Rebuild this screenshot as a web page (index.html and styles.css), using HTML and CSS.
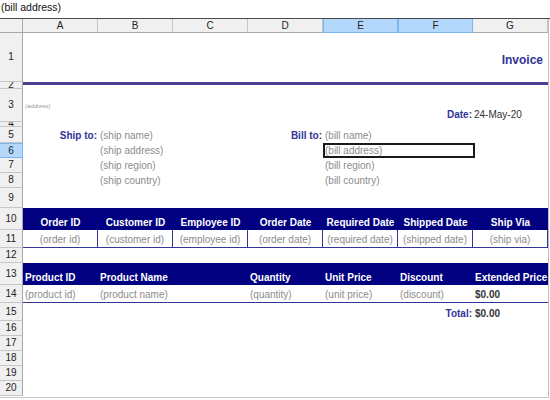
FILE: index.html
```html
<!DOCTYPE html>
<html>
<head>
<meta charset="utf-8">
<link rel="stylesheet" href="styles.css">
</head>
<body>
<div class="formula">(bill address)</div>
<div class="sheet">
  <div class="row colhdr">
    <div class="ch corner"></div>
    <div class="ch">A</div><div class="ch">B</div><div class="ch">C</div><div class="ch">D</div>
    <div class="ch sel">E</div><div class="ch sel">F</div><div class="ch">G</div>
  </div>

  <div class="row h49">
    <div class="rh">1</div>
    <div class="c span6"></div>
    <div class="c rt title">Invoice</div>
  </div>

  <div class="row h7">
    <div class="rh">2</div>
    <div class="c span7 rule"></div>
  </div>

  <div class="row h33">
    <div class="rh">3</div>
    <div class="c mid addr">(address)</div>
    <div class="c span4"></div>
    <div class="c rt lbl">Date:</div>
    <div class="c val">24-May-20</div>
  </div>

  <div class="row h5">
    <div class="rh">4</div>
  </div>

  <div class="row h16">
    <div class="rh">5</div>
    <div class="c rt lbl">Ship to:</div>
    <div class="c gray">(ship name)</div>
    <div class="c"></div>
    <div class="c rt lbl">Bill to:</div>
    <div class="c gray">(bill name)</div>
  </div>

  <div class="row h15">
    <div class="rh rsel">6</div>
    <div class="c"></div>
    <div class="c gray">(ship address)</div>
    <div class="c"></div>
    <div class="c"></div>
    <div class="c span2 gray active">(bill address)</div>
  </div>

  <div class="row h15">
    <div class="rh">7</div>
    <div class="c"></div>
    <div class="c gray">(ship region)</div>
    <div class="c"></div>
    <div class="c"></div>
    <div class="c gray">(bill region)</div>
  </div>

  <div class="row h15">
    <div class="rh">8</div>
    <div class="c"></div>
    <div class="c gray">(ship country)</div>
    <div class="c"></div>
    <div class="c"></div>
    <div class="c gray">(bill country)</div>
  </div>

  <div class="row h20">
    <div class="rh">9</div>
  </div>

  <div class="row h22">
    <div class="rh">10</div>
    <div class="c band ctr">Order ID</div>
    <div class="c band ctr">Customer ID</div>
    <div class="c band ctr">Employee ID</div>
    <div class="c band ctr">Order Date</div>
    <div class="c band ctr">Required Date</div>
    <div class="c band ctr">Shipped Date</div>
    <div class="c band ctr">Ship Via</div>
  </div>

  <div class="row h18">
    <div class="rh">11</div>
    <div class="c data ctr gray">(order id)</div>
    <div class="c data ctr gray">(customer id)</div>
    <div class="c data ctr gray">(employee id)</div>
    <div class="c data ctr gray">(order date)</div>
    <div class="c data ctr gray">(required date)</div>
    <div class="c data ctr gray">(shipped date)</div>
    <div class="c data ctr gray">(ship via)</div>
  </div>

  <div class="row h15">
    <div class="rh">12</div>
  </div>

  <div class="row h22">
    <div class="rh">13</div>
    <div class="c band">Product ID</div>
    <div class="c band span2">Product Name</div>
    <div class="c band">Quantity</div>
    <div class="c band">Unit Price</div>
    <div class="c band">Discount</div>
    <div class="c band">Extended Price</div>
  </div>

  <div class="row h18">
    <div class="rh">14</div>
    <div class="c line gray">(product id)</div>
    <div class="c line span2 gray">(product name)</div>
    <div class="c line gray">(quantity)</div>
    <div class="c line gray">(unit price)</div>
    <div class="c line gray">(discount)</div>
    <div class="c line money">$0.00</div>
  </div>

  <div class="row h18">
    <div class="rh">15</div>
    <div class="c span5"></div>
    <div class="c rt lbl">Total:</div>
    <div class="c money">$0.00</div>
  </div>

  <div class="row h15"><div class="rh">16</div></div>
  <div class="row h15"><div class="rh">17</div></div>
  <div class="row h15"><div class="rh">18</div></div>
  <div class="row h15"><div class="rh">19</div></div>
  <div class="row h15"><div class="rh">20</div></div>
</div>
</body>
</html>
```

FILE: styles.css
```css
html, body {
  margin: 0;
  padding: 0;
  background: #ffffff;
}

body {
  font-family: "Liberation Sans", Arial, sans-serif;
  font-size: 10px;
  color: #222222;
  width: 550px;
  height: 400px;
  overflow: hidden;
}

.formula {
  height: 18px;
  line-height: 14px;
  padding-left: 1px;
  font-size: 10.5px;
  color: #111111;
  border-bottom: 1px solid #4a4a4a;
  box-sizing: content-box;
}

.sheet {
  width: 548px;
  height: 378px;
  border-right: 1px solid #bdbdbd;
  border-bottom: 1px solid #c8c8c8;
  overflow: hidden;
}

.row {
  display: grid;
  grid-template-columns: 23px repeat(6, 75px) 75px;
  overflow: hidden;
}

.colhdr { height: 14px; }
.h5 { height: 5px; }
.h7 { height: 7px; }
.h15 { height: 15px; }
.h16 { height: 16px; }
.h18 { height: 18px; }
.h20 { height: 20px; }
.h22 { height: 22px; }
.h33 { height: 33px; }
.h49 { height: 49px; }

.ch {
  background: #f0f0f0;
  border-right: 1px solid #c6c6c6;
  border-bottom: 1px solid #a8a8a8;
  text-align: center;
  line-height: 13px;
  font-size: 10px;
  color: #222222;
}

.ch.corner {
  border-right: 1px solid #a8a8a8;
}

.ch.sel {
  background: #b4d8fc;
  border-right: 1px solid #7ab6f2;
  border-left: 1px solid #7ab6f2;
  border-bottom: 1px solid #7ab6f2;
}

.rh {
  background: #f0f0f0;
  border-right: 1px solid #a8a8a8;
  border-bottom: 1px solid #c6c6c6;
  display: flex;
  align-items: center;
  justify-content: center;
  font-size: 10px;
  color: #222222;
  overflow: hidden;
  line-height: 12px;
}

.rh.rsel {
  background: #b4d8fc;
  border: 1px solid #7ab6f2;
  border-left: none;
}

.c {
  display: flex;
  align-items: flex-end;
  padding: 0 2px 1px 2px;
  line-height: 13px;
  white-space: nowrap;
  overflow: hidden;
  min-width: 0;
}

.span2 { grid-column: span 2; }
.span4 { grid-column: span 4; }
.span5 { grid-column: span 5; }
.span6 { grid-column: span 6; }
.span7 { grid-column: span 7; }

.rt { justify-content: flex-end; }
.ctr { justify-content: center; }
.mid { align-items: center; }

.title {
  font-size: 12px;
  font-weight: bold;
  color: #333399;
  align-items: center;
  padding: 5px 5px 0 0;
}

.rule {
  border-top: 3px solid #4a3f90;
  padding: 0;
}

.addr {
  font-size: 6px;
  font-style: italic;
  color: #9a9a9a;
  line-height: 8px;
  padding-bottom: 0;
}

.lbl {
  font-weight: bold;
  color: #333399;
  padding-right: 1px;
}

.val {
  color: #333333;
  padding-left: 1px;
}

.gray {
  color: #8c8c8c;
}

.active {
  box-shadow: inset 0 0 0 2px #1a1a1a;
  padding-left: 2px;
  margin-right: -2px;
}

.band {
  background: #000080;
  color: #ffffff;
  font-weight: bold;
}

.data {
  border-right: 1px solid #333399;
  border-bottom: 1px solid #333399;
  padding-bottom: 1px;
}

.line {
  border-bottom: 1px solid #333399;
  padding-bottom: 1px;
}

.money {
  font-weight: bold;
  color: #333333;
}
```
